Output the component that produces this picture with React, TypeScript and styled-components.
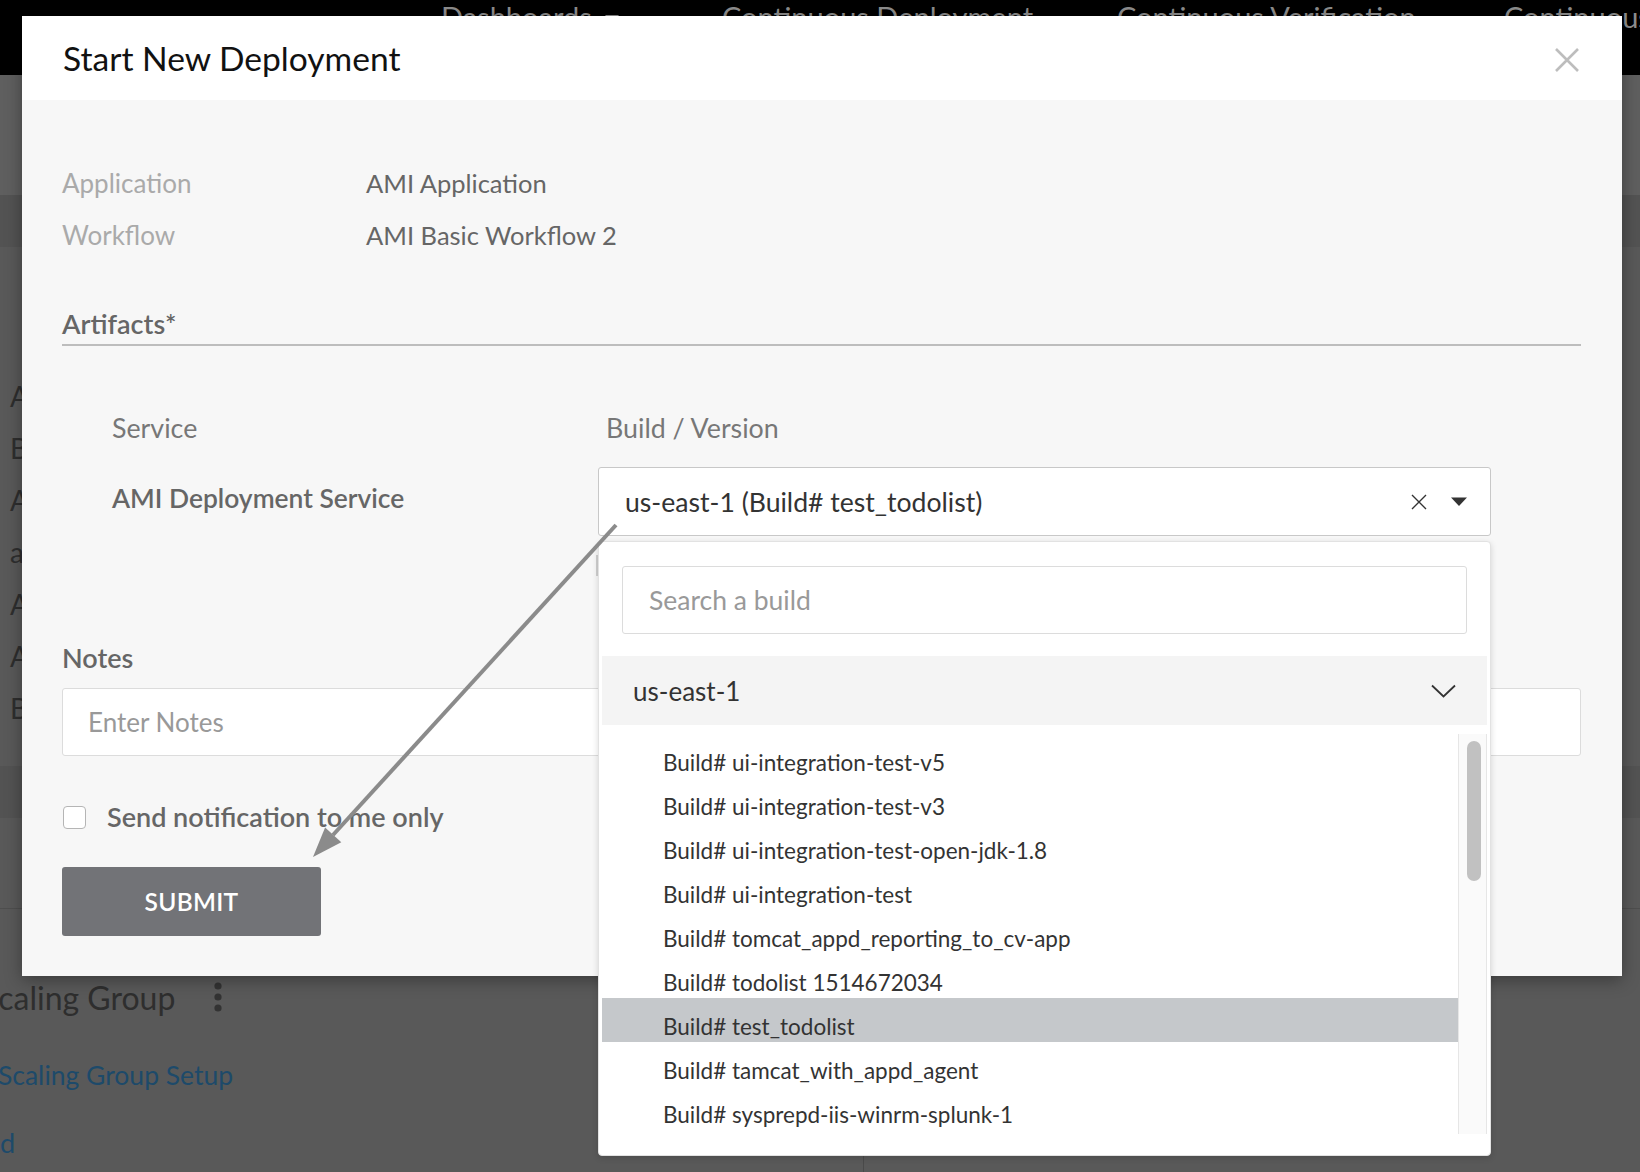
import React from 'react'
import styled, { createGlobalStyle } from 'styled-components'

const GlobalStyle = createGlobalStyle`
  html, body {
    margin: 0;
    padding: 0;
  }
  body {
    width: 1640px;
    height: 1172px;
    overflow: hidden;
    font-family: Lato, 'Open Sans', sans-serif;
  }
  * {
    box-sizing: border-box;
  }
`

const builds = [
  'ui-integration-test-v5',
  'ui-integration-test-v3',
  'ui-integration-test-open-jdk-1.8',
  'ui-integration-test',
  'tomcat_appd_reporting_to_cv-app',
  'todolist 1514672034',
  'test_todolist',
  'tamcat_with_appd_agent',
  'sysprepd-iis-winrm-splunk-1',
]

const selectedBuild = 'test_todolist'

// ---- page behind the modal (dimmed) ----

const Page = styled.div`
  position: relative;
  width: 1640px;
  height: 1172px;
  overflow: hidden;
  background: #595959;
  color: #333;
`

const TopNav = styled.nav`
  display: flex;
  height: 75px;
  padding-left: 441px;
  background: #000;
`

const NavItem = styled.div<{ $w: number }>`
  display: flex;
  align-items: flex-start;
  gap: 12px;
  flex-shrink: 0;
  width: ${(p) => p.$w}px;
  padding-top: 2px;
  font-size: 29px;
  line-height: 30px;
  color: #8d8d8d;
  white-space: nowrap;
`

const SubHeader = styled.div`
  height: 120px;
  background: #5f5f5f;
`

const TabStrip = styled.div`
  height: 52px;
  background: #535353;
`

const SideList = styled.div`
  padding-top: 123px;
`

const SideRow = styled.div`
  height: 52px;
  line-height: 52px;
  padding-left: 10px;
  font-size: 28px;
  color: #2e2e2e;
`

const Band = styled.div`
  margin-top: 32px;
  height: 52px;
  background: #535353;
`

const Rule = styled.div`
  margin-top: 90px;
  height: 1px;
  background: #4e4e4e;
`

const GroupTitleRow = styled.div`
  display: flex;
  align-items: center;
  margin-top: 66px;
  height: 44px;
  font-size: 32px;
  color: #2e2e2e;
`

const GroupTitle = styled.span`
  margin-left: -19px;
`

const Kebab = styled.svg`
  margin-left: 38px;
`

const SetupLink = styled.div`
  margin-top: 36px;
  margin-left: -2px;
  height: 40px;
  line-height: 40px;
  font-size: 26.5px;
  color: #1d4a6a;
`

const FooterRow = styled.div`
  display: flex;
  margin-top: 28px;
  height: 49px;
`

const FooterCell = styled.div`
  width: 863px;
  line-height: 40px;
  font-size: 27px;
  color: #1d4a6a;
`

const FooterDivider = styled.div`
  flex: 1;
  margin-top: 12px;
  border-left: 1px solid #4a4a4a;
`

// ---- modal ----

const Modal = styled.div`
  position: absolute;
  top: 16px;
  left: 22px;
  z-index: 2;
  display: flex;
  flex-direction: column;
  width: 1600px;
  height: 960px;
  background: #f7f7f7;
  box-shadow: 0 4px 16px rgba(0, 0, 0, 0.35);
`

const ModalHeader = styled.header`
  display: flex;
  align-items: center;
  justify-content: space-between;
  flex-shrink: 0;
  height: 84px;
  padding: 0 43px 0 41px;
  background: #fff;
`

const ModalTitle = styled.h1`
  margin: 0;
  font-size: 33.6px;
  font-weight: 400;
  color: #111;
`

const CloseIcon = styled.svg`
  margin-top: 4px;
`

const ModalBody = styled.div`
  flex: 1;
  padding: 57px 41px 0 40px;
`

const InfoGrid = styled.div`
  display: grid;
  grid-template-columns: 304px 1fr;
  grid-auto-rows: 52px;
  align-items: center;
  font-size: 26px;
`

const InfoLabel = styled.div`
  color: #aaa;
`

const InfoValue = styled.div`
  font-size: 25.5px;
  color: #666;
`

const SectionHeading = styled.div`
  margin-top: 46px;
  padding-bottom: 3px;
  border-bottom: 2px solid #bdbdbd;
  font-size: 27px;
  line-height: 34px;
  font-weight: 600;
  color: #666;
`

const ArtifactsTable = styled.div`
  display: grid;
  grid-template-columns: 486px 893px;
  row-gap: 22px;
  margin-top: 65px;
  padding-left: 50px;
`

const ColumnHead = styled.div<{ $indent?: number }>`
  padding-left: ${(p) => p.$indent ?? 0}px;
  font-size: 26.8px;
  line-height: 34px;
  color: #777;
`

const ServiceName = styled.div`
  padding-top: 14px;
  font-size: 26.4px;
  line-height: 34px;
  font-weight: 600;
  color: #666;
`

const SelectWrap = styled.div`
  position: relative;
`

const SelectBox = styled.div`
  display: flex;
  align-items: center;
  height: 69px;
  padding: 0 23px 0 26px;
  background: #fff;
  border: 1.5px solid #c8c8c8;
  border-radius: 3px;
  font-size: 26.6px;
  color: #333;
`

const SelectValue = styled.span`
  flex: 1;
`

const ClearIcon = styled.svg`
  margin-right: 24px;
`

const Hint = styled.div`
  width: 2px;
  height: 21px;
  margin-top: 19px;
  margin-left: -2px;
  background: #cfcfcf;
`

const Dropdown = styled.div`
  position: absolute;
  top: 74px;
  left: 0;
  right: 0;
  z-index: 5;
  padding: 24px 3px 21px;
  background: #fff;
  border: 1px solid #e2e2e2;
  border-radius: 4px;
  box-shadow: 0 2px 6px rgba(0, 0, 0, 0.15);
`

const SearchInput = styled.input`
  display: block;
  width: calc(100% - 40px);
  height: 68px;
  margin: 0 20px;
  padding: 0 0 0 26px;
  background: #fff;
  border: 1.5px solid #dcdcdc;
  border-radius: 3px;
  font-family: inherit;
  font-size: 26.5px;
  color: #333;
  outline: none;

  &::placeholder {
    color: #999;
  }
`

const GroupHeader = styled.div`
  display: flex;
  align-items: center;
  justify-content: space-between;
  height: 69px;
  margin-top: 22px;
  padding: 0 31px;
  background: #f4f4f4;
  font-size: 26px;
  color: #333;
`

const ListArea = styled.div`
  display: flex;
  height: 400px;
  margin-top: 9px;
`

const ItemsColumn = styled.div`
  flex: 1;
  overflow: hidden;
`

const BuildOption = styled.div<{ $active: boolean }>`
  display: flex;
  align-items: center;
  height: 44px;
  padding: 13px 0 0 61px;
  background: ${(p) => (p.$active ? '#c5c8cb' : 'transparent')};
  font-size: 22.5px;
  color: #333;
  white-space: nowrap;
`

const ScrollTrack = styled.div`
  width: 29px;
  padding: 7px 0 0 8px;
  background: #fafafa;
  border-left: 1px solid #e6e6e6;
  border-right: 1px solid #e6e6e6;
`

const ScrollThumb = styled.div`
  width: 14px;
  height: 140px;
  border-radius: 7px;
  background: #c1c1c1;
`

const NotesLabel = styled.div`
  margin-top: 65px;
  font-size: 27px;
  line-height: 34px;
  font-weight: 600;
  color: #666;
`

const NotesInput = styled.input`
  display: block;
  width: 100%;
  height: 68px;
  margin-top: 13px;
  padding: 0 0 0 25px;
  background: #fff;
  border: 1.5px solid #dcdcdc;
  border-radius: 3px;
  font-family: inherit;
  font-size: 26px;
  outline: none;

  &::placeholder {
    color: #999;
  }
`

const CheckRow = styled.label`
  display: flex;
  align-items: center;
  gap: 21px;
  height: 34px;
  margin-top: 43px;
`

const CheckBox = styled.span`
  width: 23px;
  height: 23px;
  margin-left: 1px;
  margin-top: 2px;
  background: #fff;
  border: 1.5px solid #b5b5b5;
  border-radius: 4px;
`

const CheckLabel = styled.span`
  font-size: 27px;
  font-weight: 600;
  color: #666;
`

const SubmitButton = styled.button`
  display: block;
  width: 259px;
  height: 69px;
  margin-top: 34px;
  background: #727377;
  border: none;
  border-radius: 3px;
  font-family: inherit;
  font-size: 24.5px;
  font-weight: 600;
  letter-spacing: 0.3px;
  color: #fff;
`

const Annotation = styled.svg`
  position: absolute;
  top: 0;
  left: 0;
  z-index: 10;
  pointer-events: none;
`

const App: React.FC = () => {
  return (
    <Page>
      <GlobalStyle />

      <TopNav>
        <NavItem $w={281}>
          Dashboards
          <svg width="16" height="30" viewBox="0 0 16 30">
            <path d="M1 13h14l-7 8z" fill="#8d8d8d" />
          </svg>
        </NavItem>
        <NavItem $w={395}>Continuous Deployment</NavItem>
        <NavItem $w={387}>Continuous Verification</NavItem>
        <NavItem $w={300}>Continuous Security</NavItem>
      </TopNav>
      <SubHeader />
      <TabStrip />
      <SideList>
        {['A', 'B', 'A', 'a', 'A', 'A', 'B'].map((letter, i) => (
          <SideRow key={i}>{letter}</SideRow>
        ))}
      </SideList>
      <Band />
      <Rule />
      <GroupTitleRow>
        <GroupTitle>Scaling Group</GroupTitle>
        <Kebab width="10" height="30" viewBox="0 0 10 30">
          <circle cx="5" cy="4" r="3.6" fill="#333" />
          <circle cx="5" cy="15" r="3.6" fill="#333" />
          <circle cx="5" cy="26" r="3.6" fill="#333" />
        </Kebab>
      </GroupTitleRow>
      <SetupLink>Scaling Group Setup</SetupLink>
      <FooterRow>
        <FooterCell>d</FooterCell>
        <FooterDivider />
      </FooterRow>

      <Modal>
        <ModalHeader>
          <ModalTitle>Start New Deployment</ModalTitle>
          <CloseIcon width="24" height="24" viewBox="0 0 24 24">
            <path d="M1 1L23 23M23 1L1 23" stroke="#bdbdbd" strokeWidth="2.6" fill="none" />
          </CloseIcon>
        </ModalHeader>

        <ModalBody>
          <InfoGrid>
            <InfoLabel>Application</InfoLabel>
            <InfoValue>AMI Application</InfoValue>
            <InfoLabel>Workflow</InfoLabel>
            <InfoValue>AMI Basic Workflow 2</InfoValue>
          </InfoGrid>

          <SectionHeading>Artifacts*</SectionHeading>

          <ArtifactsTable>
            <ColumnHead>Service</ColumnHead>
            <ColumnHead $indent={8}>Build / Version</ColumnHead>
            <ServiceName>AMI Deployment Service</ServiceName>
            <div>
              <SelectWrap>
                <SelectBox>
                  <SelectValue>us-east-1 (Build# {selectedBuild})</SelectValue>
                  <ClearIcon width="16" height="16" viewBox="0 0 16 16">
                    <path d="M1 1L15 15M15 1L1 15" stroke="#333" strokeWidth="1.4" fill="none" />
                  </ClearIcon>
                  <svg width="16" height="10" viewBox="0 0 16 10">
                    <path d="M0 0.5h16L8 9z" fill="#333" />
                  </svg>
                </SelectBox>

                <Dropdown>
                  <SearchInput readOnly placeholder="Search a build" />
                  <GroupHeader>
                    us-east-1
                    <svg width="25" height="14" viewBox="0 0 25 14">
                      <path d="M1 1.5L12.5 12.5L24 1.5" stroke="#333" strokeWidth="1.8" fill="none" />
                    </svg>
                  </GroupHeader>
                  <ListArea>
                    <ItemsColumn>
                      {builds.map((b) => (
                        <BuildOption key={b} $active={b === selectedBuild}>
                          Build# {b}
                        </BuildOption>
                      ))}
                    </ItemsColumn>
                    <ScrollTrack>
                      <ScrollThumb />
                    </ScrollTrack>
                  </ListArea>
                </Dropdown>
              </SelectWrap>
              <Hint />
            </div>
          </ArtifactsTable>

          <NotesLabel>Notes</NotesLabel>
          <NotesInput readOnly placeholder="Enter Notes" />

          <CheckRow>
            <CheckBox />
            <CheckLabel>Send notification to me only</CheckLabel>
          </CheckRow>

          <SubmitButton type="button">SUBMIT</SubmitButton>
        </ModalBody>
      </Modal>

      {/* annotation arrow drawn over the screenshot */}
      <Annotation width="1640" height="1172" viewBox="0 0 1640 1172">
        <line x1="616" y1="525" x2="333" y2="835" stroke="#8b8b8b" strokeWidth="4" />
        <polygon points="313,857 341.3,842.2 325.1,827.4" fill="#8b8b8b" />
      </Annotation>
    </Page>
  )
}

export default App
